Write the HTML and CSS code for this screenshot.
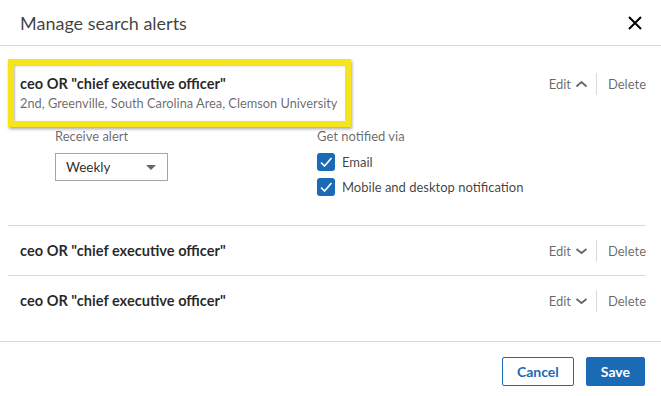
FILE: index.html
```html
<!DOCTYPE html>
<html lang="en">
<head>
    <meta charset="UTF-8">
    <meta name="viewport" content="width=device-width, initial-scale=1.0">
    <title>Manage search alerts</title>
    <link rel="stylesheet" href="styles.css">
</head>
<body>
    <div class="modal">
        <!-- Header -->
        <div class="modal-header">
            <h2>Manage search alerts</h2>
            <button class="close-btn" aria-label="Close">
                <svg width="16" height="16" viewBox="0 0 16 16"><path d="M2 2 L14 14 M14 2 L2 14" stroke="#000" stroke-width="2" fill="none"/></svg>
            </button>
        </div>

        <!-- Alerts -->
        <ul class="alert-list">
            <li class="alert open">
                <div class="alert-top">
                    <div class="alert-info highlight">
                        <div class="alert-title">ceo OR "chief executive officer"</div>
                        <div class="alert-meta">2nd, Greenville, South Carolina Area, Clemson University</div>
                    </div>
                    <div class="alert-actions">
                        <a href="#" class="edit">Edit
                            <svg width="13" height="8" viewBox="0 0 13 8"><path d="M1.5 6.5 L6.5 2 L11.5 6.5" stroke="#666" stroke-width="1.8" fill="none"/></svg>
                        </a>
                        <span class="sep"></span>
                        <a href="#">Delete</a>
                    </div>
                </div>
                <div class="alert-options">
                    <div class="opt-col">
                        <div class="opt-label">Receive alert</div>
                        <div class="select">
                            <span>Weekly</span>
                            <span class="caret"></span>
                        </div>
                    </div>
                    <div class="opt-col">
                        <div class="opt-label">Get notified via</div>
                        <label class="check">
                            <span class="box"><svg width="14" height="12" viewBox="0 0 14 12"><path d="M2 6.5 L5.5 10 L12.5 2" stroke="#fff" stroke-width="1.6" fill="none"/></svg></span>
                            Email
                        </label>
                        <label class="check">
                            <span class="box"><svg width="14" height="12" viewBox="0 0 14 12"><path d="M2 6.5 L5.5 10 L12.5 2" stroke="#fff" stroke-width="1.6" fill="none"/></svg></span>
                            Mobile and desktop notification
                        </label>
                    </div>
                </div>
            </li>
            <li class="alert">
                <div class="alert-top">
                    <div class="alert-info">
                        <div class="alert-title">ceo OR "chief executive officer"</div>
                    </div>
                    <div class="alert-actions">
                        <a href="#" class="edit">Edit
                            <svg width="13" height="8" viewBox="0 0 13 8"><path d="M1.5 2 L6.5 6 L11.5 2" stroke="#666" stroke-width="1.8" fill="none"/></svg>
                        </a>
                        <span class="sep"></span>
                        <a href="#">Delete</a>
                    </div>
                </div>
            </li>
            <li class="alert">
                <div class="alert-top">
                    <div class="alert-info">
                        <div class="alert-title">ceo OR "chief executive officer"</div>
                    </div>
                    <div class="alert-actions">
                        <a href="#" class="edit">Edit
                            <svg width="13" height="8" viewBox="0 0 13 8"><path d="M1.5 2 L6.5 6 L11.5 2" stroke="#666" stroke-width="1.8" fill="none"/></svg>
                        </a>
                        <span class="sep"></span>
                        <a href="#">Delete</a>
                    </div>
                </div>
            </li>
        </ul>

        <!-- Footer -->
        <div class="modal-footer">
            <button class="btn btn-secondary">Cancel</button>
            <button class="btn btn-primary">Save</button>
        </div>
    </div>
</body>
</html>
```

FILE: styles.css
```css
body {
    font-family: 'Lato', 'Liberation Sans', sans-serif;
    margin: 0;
    padding: 0;
    background-color: #fff;
    color: rgba(0, 0, 0, 0.9);
}

.modal {
    width: 661px;
    height: 396px;
    background-color: #fff;
}

.modal-header {
    height: 45px;
    display: flex;
    align-items: center;
    justify-content: space-between;
    padding: 0 18px 0 20px;
    border-bottom: 1px solid #d9d9d9;
}

.modal-header h2 {
    margin: 0;
    font-size: 18px;
    font-weight: normal;
    color: rgba(0, 0, 0, 0.75);
}

.close-btn {
    background: none;
    border: none;
    padding: 0;
    display: flex;
    cursor: pointer;
}

.alert-list {
    list-style: none;
    margin: 0;
    padding: 0 15px 15px 8px;
}

.alert {
    padding: 15px 0 14px 12px;
    border-bottom: 1px solid #d9d9d9;
}

.alert:last-child {
    border-bottom: none;
    padding-bottom: 15px;
}

.alert.open {
    padding-top: 28px;
    padding-bottom: 29px;
}

.alert-top {
    display: flex;
    justify-content: space-between;
    align-items: flex-start;
}

.alert-info {
    position: relative;
}

/* yellow annotation box */
.highlight::before {
    content: '';
    position: absolute;
    left: -12px;
    top: -15px;
    width: 331px;
    height: 56px;
    border: 6px solid #f7e51b;
    box-shadow: 1px 2px 3px rgba(0, 0, 0, 0.35), inset 1px 1px 2px rgba(0, 0, 0, 0.25);
}

.alert-title {
    font-size: 14.6px;
    font-weight: bold;
    line-height: 20px;
    color: rgba(0, 0, 0, 0.85);
}

.alert-meta {
    font-size: 12.8px;
    line-height: 18px;
    color: rgba(0, 0, 0, 0.6);
}

.alert-actions {
    display: flex;
    align-items: center;
    height: 20px;
    font-size: 13px;
}

.alert-actions a {
    color: rgba(0, 0, 0, 0.6);
    text-decoration: none;
}

.alert-actions .edit {
    display: flex;
    align-items: center;
    gap: 4px;
}

.sep {
    width: 1px;
    height: 22px;
    background-color: #d9d9d9;
    margin: 0 11px 0 8px;
}

.alert-options {
    display: flex;
    padding-left: 35px;
    margin-top: 15px;
}

.opt-col {
    width: 262px;
}

.opt-label {
    font-size: 13px;
    line-height: 18px;
    color: rgba(0, 0, 0, 0.6);
    margin-bottom: 8px;
}

.select {
    width: 113px;
    height: 28px;
    box-sizing: border-box;
    border: 1px solid #a6a6a6;
    display: flex;
    align-items: center;
    justify-content: space-between;
    padding: 0 11px 0 10px;
    font-size: 13.5px;
    color: rgba(0, 0, 0, 0.85);
}

.caret {
    width: 0;
    height: 0;
    border-left: 5px solid transparent;
    border-right: 5px solid transparent;
    border-top: 5px solid #666;
}

.check {
    display: flex;
    align-items: center;
    gap: 7px;
    height: 18px;
    margin-bottom: 7px;
    font-size: 13px;
    color: rgba(0, 0, 0, 0.75);
}

.check:last-child {
    margin-bottom: 0;
}

.check .box {
    width: 18px;
    height: 18px;
    border-radius: 3px;
    background-color: #1a6ab5;
    display: flex;
    align-items: center;
    justify-content: center;
}

.modal-footer {
    display: flex;
    justify-content: flex-end;
    gap: 12px;
    padding: 15px 16px 0 0;
    border-top: 1px solid #d9d9d9;
}

.btn {
    height: 29px;
    padding: 0 14px;
    font-family: inherit;
    font-size: 14px;
    font-weight: bold;
    border-radius: 2px;
    cursor: pointer;
}

.btn-secondary {
    background-color: #fff;
    color: #1a6ab5;
    border: 1px solid #1a6ab5;
}

.btn-primary {
    background-color: #1a6ab5;
    color: #fff;
    border: 1px solid #1a6ab5;
}
```
